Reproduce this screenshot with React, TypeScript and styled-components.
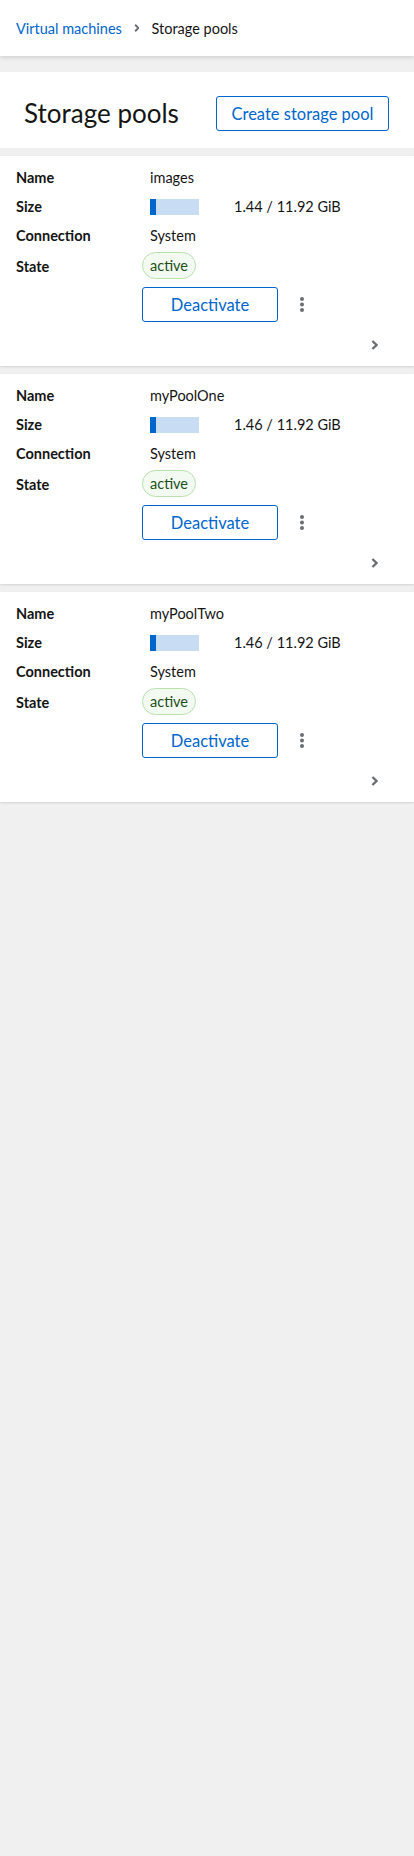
import React from "react";
import styled, { createGlobalStyle } from "styled-components";

const GlobalStyle = createGlobalStyle`
  html, body { margin: 0; padding: 0; }
  body {
    background: #f0f0f0;
    font-family: Lato, "Open Sans", sans-serif;
    color: #151515;
    font-size: 14px;
  }
  #root { min-height: 1856px; }
`;

const Page = styled.div`
  display: flex;
  flex-direction: column;
  min-height: 1856px;
  background: #f0f0f0;
`;

const Header = styled.header`
  height: 56px;
  background: #fff;
  box-shadow: 0 2px 4px rgba(3, 3, 3, 0.12);
  display: flex;
  align-items: center;
  padding: 0 16px;
  margin-bottom: 16px;
  position: relative;
  z-index: 1;
`;

const Crumbs = styled.nav`
  display: flex;
  align-items: center;
  gap: 12px;
  font-size: 14.5px;
`;

const CrumbLink = styled.a`
  color: #0066cc;
  text-decoration: none;
`;

const CrumbCurrent = styled.span`
  color: #151515;
`;

const TitleSection = styled.section`
  background: #fff;
  height: 76px;
  padding: 0 25px 0 24px;
  box-sizing: border-box;
  display: flex;
  align-items: center;
  justify-content: space-between;
  margin-bottom: 8px;
`;

const Title = styled.h1`
  margin: 0;
  font-size: 26px;
  font-weight: 400;
  color: #151515;
  padding-top: 6px;
`;

const SecondaryButton = styled.button<{ $width?: number }>`
  font-family: inherit;
  font-size: 16.5px;
  color: #0066cc;
  background: #fff;
  border: 1px solid #0066cc;
  border-radius: 3px;
  height: 35px;
  width: ${(p) => (p.$width ? `${p.$width}px` : "auto")};
  padding: 0 8px;
  white-space: nowrap;
  cursor: pointer;
`;

const CreateWrap = styled.div`
  padding-top: 7px;
`;

const Cards = styled.div`
  display: flex;
  flex-direction: column;
  gap: 8px;
`;

const Card = styled.article`
  background: #fff;
  height: 210px;
  box-sizing: border-box;
  padding: 11px 0 0 16px;
  display: flex;
  flex-direction: column;
  box-shadow: 0 1px 2px rgba(3, 3, 3, 0.12);
`;

const Grid = styled.dl`
  margin: 0;
  display: grid;
  grid-template-columns: 126px 1fr;
  row-gap: 8px;
  align-items: center;
  font-size: 14.5px;
`;

const Label = styled.dt`
  font-weight: 700;
  line-height: 21px;
  margin: 0;
`;

const Value = styled.dd`
  margin: 0;
  line-height: 21px;
  display: flex;
  align-items: center;
  padding-left: 8px;
  color: #151515;
`;

const BadgeValue = styled.dd`
  margin: 0;
  display: flex;
  align-items: center;
`;

const Bar = styled.div`
  width: 49px;
  height: 16px;
  background: #c8ddf3;
  margin-right: 35px;
  display: flex;
`;

const BarFill = styled.div`
  height: 100%;
  background: #0066cc;
`;

const Badge = styled.span`
  display: inline-flex;
  align-items: center;
  height: 27px;
  box-sizing: border-box;
  padding: 0 7px;
  border-radius: 30em;
  border: 1px solid #b9e1ae;
  background: #f3faf2;
  color: #1e4f18;
  font-size: 14.5px;
  margin-top: -2px;
`;

const Actions = styled.div`
  display: flex;
  align-items: center;
  margin-top: 8px;
  padding-left: 126px;
  gap: 16px;
`;

const KebabButton = styled.button`
  background: none;
  border: none;
  padding: 4px 6px;
  display: flex;
  cursor: pointer;
`;

const ExpandRow = styled.div`
  display: flex;
  justify-content: flex-end;
  padding-right: 36px;
  margin-top: 18px;
`;

const Kebab = () => (
  <svg width="4" height="15" viewBox="0 0 4 15">
    <circle cx="2" cy="2" r="2" fill="#6a6e73" />
    <circle cx="2" cy="7.5" r="2" fill="#6a6e73" />
    <circle cx="2" cy="13" r="2" fill="#6a6e73" />
  </svg>
);

const Chevron = ({ size = 8, color = "#6a6e73" }: { size?: number; color?: string }) => (
  <svg width={size * 0.7} height={size} viewBox="0 0 7 10">
    <path d="M1.4 1 L5.6 5 L1.4 9" stroke={color} strokeWidth="2.4" fill="none" strokeLinejoin="miter" />
  </svg>
);

type Pool = { name: string; used: number; total: number };

const pools: Pool[] = [
  { name: "images", used: 1.44, total: 11.92 },
  { name: "myPoolOne", used: 1.46, total: 11.92 },
  { name: "myPoolTwo", used: 1.46, total: 11.92 },
];

const PoolCard = ({ pool }: { pool: Pool }) => (
  <Card>
    <Grid>
      <Label>Name</Label>
      <Value>{pool.name}</Value>
      <Label>Size</Label>
      <Value>
        <Bar>
          <BarFill style={{ width: `${(pool.used / pool.total) * 100}%` }} />
        </Bar>
        {pool.used.toFixed(2)} / {pool.total.toFixed(2)} GiB
      </Value>
      <Label>Connection</Label>
      <Value>System</Value>
      <Label>State</Label>
      <BadgeValue>
        <Badge>active</Badge>
      </BadgeValue>
    </Grid>
    <Actions>
      <SecondaryButton $width={136}>Deactivate</SecondaryButton>
      <KebabButton aria-label="Actions">
        <Kebab />
      </KebabButton>
    </Actions>
    <ExpandRow>
      <Chevron size={10} />
    </ExpandRow>
  </Card>
);

export default function App() {
  return (
    <Page>
      <GlobalStyle />
      <Header>
        <Crumbs>
          <CrumbLink href="#">Virtual machines</CrumbLink>
          <Chevron size={8} />
          <CrumbCurrent>Storage pools</CrumbCurrent>
        </Crumbs>
      </Header>
      <TitleSection>
        <Title>Storage pools</Title>
        <CreateWrap>
          <SecondaryButton $width={173}>Create storage pool</SecondaryButton>
        </CreateWrap>
      </TitleSection>
      <Cards>
        {pools.map((p) => (
          <PoolCard key={p.name} pool={p} />
        ))}
      </Cards>
    </Page>
  );
}
